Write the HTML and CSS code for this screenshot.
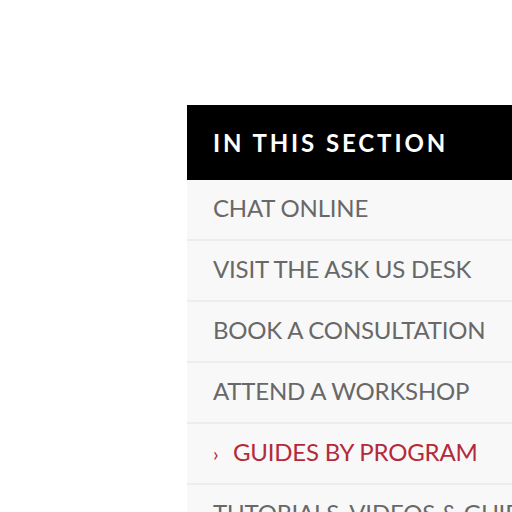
FILE: index.html
```html
<!DOCTYPE html>
<html>
<head>
<meta charset="utf-8">
<link rel="stylesheet" href="styles.css">
</head>
<body>
<nav class="section-nav">
  <h2 class="section-title">IN THIS SECTION</h2>
  <ul class="section-list">
    <li class="item"><a href="#">CHAT ONLINE</a></li>
    <li class="item"><a href="#">VISIT THE ASK US DESK</a></li>
    <li class="item"><a href="#">BOOK A CONSULTATION</a></li>
    <li class="item"><a href="#">ATTEND A WORKSHOP</a></li>
    <li class="item active"><a href="#"><span class="chev">›</span>GUIDES BY PROGRAM</a></li>
    <li class="item"><a href="#">TUTORIALS, VIDEOS &amp; GUIDES</a></li>
  </ul>
</nav>
</body>
</html>
```

FILE: styles.css
```css
html, body {
  margin: 0;
  padding: 0;
  background: #ffffff;
  overflow: hidden;
  height: 512px;
}
body {
  padding: 105px 0 0 187px;
  font-family: Lato, "Open Sans", sans-serif;
}
.section-nav {
  width: 420px;
}
.section-title {
  margin: 0;
  background: #000000;
  color: #ffffff;
  font-size: 24px;
  font-weight: 700;
  letter-spacing: 2.9px;
  height: 75px;
  line-height: 75px;
  padding-left: 26px;
}
.section-list {
  list-style: none;
  margin: 0;
  padding: 0;
}
.item {
  background: #f8f8f8;
  border-bottom: 2px solid #ededed;
  height: 59px;
}
.item a {
  display: block;
  height: 59px;
  line-height: 56px;
  padding-left: 26px;
  color: #686868;
  text-decoration: none;
  font-size: 24px;
  letter-spacing: -0.2px;
  white-space: nowrap;
}
.item.active a {
  color: #b42a3a;
}
.chev {
  display: inline-block;
  width: 20px;
  font-size: 20px;
}
```
